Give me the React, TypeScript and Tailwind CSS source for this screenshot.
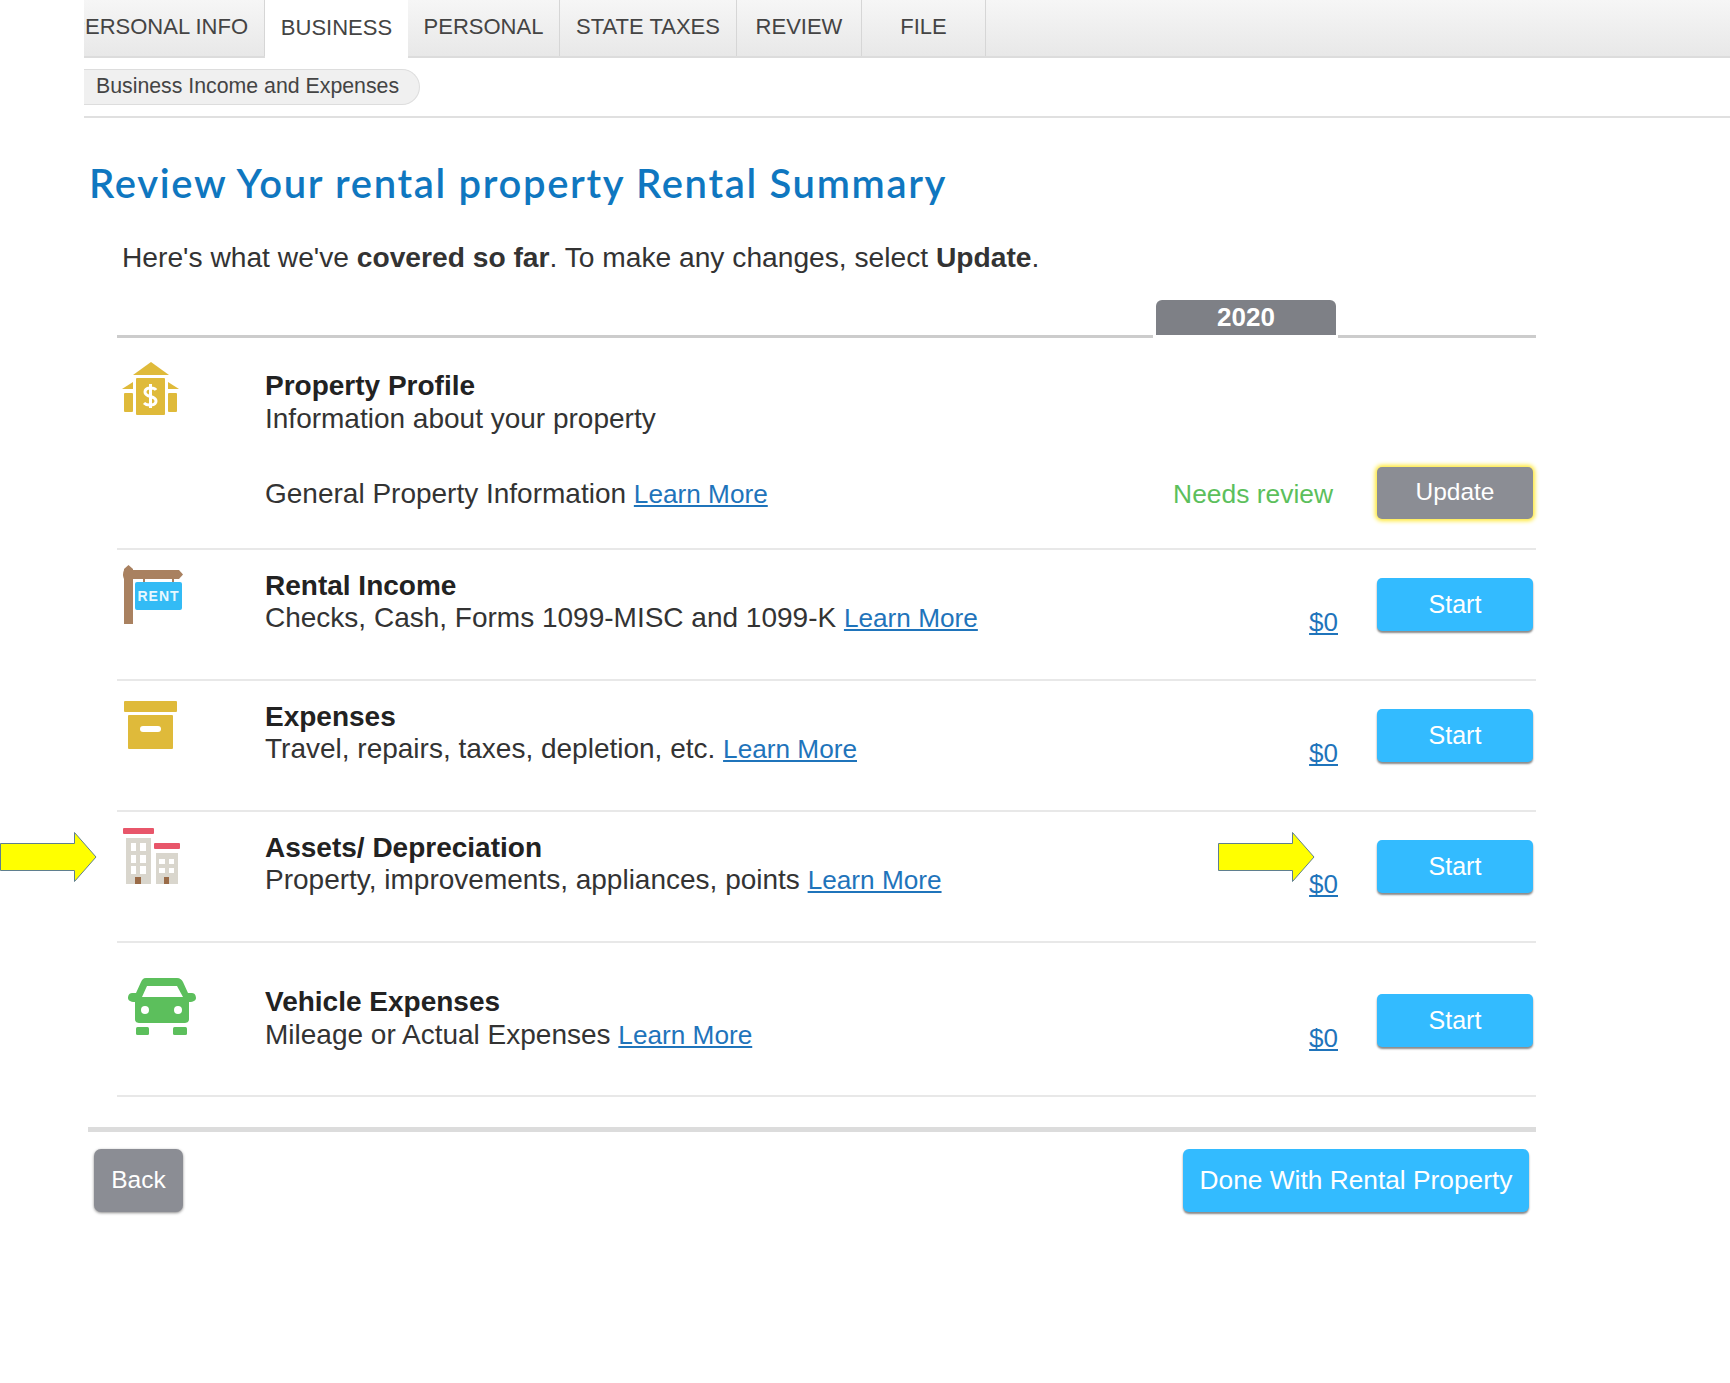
type RowProps = {
  icon: React.ReactNode
  title: string
  desc: string
}

function HouseIcon() {
  return (
    <svg width="58" height="54" viewBox="0 0 58 54" fill="#dfba3a">
      <path d="M29 0 L47 13 L11 13 Z" />
      <rect x="14" y="16" width="29" height="37" rx="1" />
      <path d="M0 27 L11 20 L11 27 Z" />
      <path d="M57 27 L46 20 L46 27 Z" />
      <rect x="2" y="31" width="9" height="19" rx="1" />
      <rect x="46" y="31" width="9" height="19" rx="1" />
      <path d="M34 28 C32 25 23 25 23 30 C23 36 34 33 34 39 C34 44 25 44 22 41 M28.5 22 V46" fill="none" stroke="#fff" strokeWidth="3" />
    </svg>
  )
}

function RentIcon() {
  return (
    <svg className="-mt-px" width="62" height="60" viewBox="0 0 62 60">
      <path d="M2 4 L6.5 0 L11 4 V59 H2 Z" fill="#a98160" />
      <path d="M2 5 H57 L61 9.5 L57 14 H2 Q0 9.5 2 5 Z" fill="#a98160" />
      <rect x="21" y="14" width="2" height="3" fill="#a98160" />
      <rect x="50" y="14" width="2" height="3" fill="#a98160" />
      <rect x="13" y="17" width="47" height="28" rx="2" fill="#33bbf5" />
      <text x="36.5" y="36" textAnchor="middle" fill="#e8f8ff" fontSize="14" fontWeight="700" letterSpacing="1" fontFamily="'Liberation Sans', sans-serif">RENT</text>
    </svg>
  )
}

function BoxIcon() {
  return (
    <svg width="54" height="50" viewBox="0 0 54 50" fill="#dfba3a">
      <rect x="0" y="0" width="53" height="11" rx="1" />
      <rect x="4" y="14" width="45" height="34" rx="1" />
      <rect x="16" y="25" width="21" height="6" rx="3" fill="#fff" />
    </svg>
  )
}

function BuildingsIcon() {
  const win = "#ffffff"
  return (
    <svg width="60" height="58" viewBox="0 0 60 58">
      <rect x="1" y="0" width="31" height="6" rx="1" fill="#e8566a" />
      <rect x="4" y="10" width="25" height="46" fill="#d9d6cd" />
      <rect x="32" y="15" width="26" height="6" rx="1" fill="#e8566a" />
      <rect x="34" y="25" width="22" height="31" fill="#d9d6cd" />
      {[15, 27, 38].map((y) => (
        <g key={y} fill={win}>
          <rect x="9" y={y} width="5" height="8" />
          <rect x="18" y={y} width="6" height="8" />
        </g>
      ))}
      {[31, 40].map((y) => (
        <g key={y} fill={win}>
          <rect x="37" y={y} width="6" height="5" />
          <rect x="47" y={y} width="5" height="5" />
        </g>
      ))}
      <rect x="13" y="49" width="6" height="7" fill="#9a6b47" />
      <rect x="42" y="49" width="5" height="7" fill="#9a6b47" />
    </svg>
  )
}

function CarIcon() {
  return (
    <svg width="68" height="57" viewBox="0 0 68 57" fill="#5cbf5c">
      <path d="M18 0 H49 C52 0 54 2 55 4 L60 15 H64 C67 15 68 18 68 20 C68 22 66 24 61 24 V41 C61 44 59 45 56 45 H12 C9 45 7 44 7 41 V24 C2 24 0 22 0 20 C0 18 1 15 4 15 H8 L13 4 C14 2 15 0 18 0 Z" />
      <path d="M19 8 H49 L55 19 H14 Z" fill="#fff" />
      <circle cx="17" cy="32" r="4" fill="#fff" />
      <circle cx="50" cy="32" r="4" fill="#fff" />
      <rect x="8" y="49" width="13" height="8" rx="1.5" />
      <rect x="45" y="49" width="14" height="8" rx="1.5" />
    </svg>
  )
}

function YellowArrow({ className }: { className: string }) {
  return (
    <svg className={className} width="97" height="52" viewBox="0 0 97 52">
      <path d="M0.5 12.5 H74.5 V1.5 L96 26 L74.5 50.5 V39.5 H0.5 Z" fill="#ffff00" stroke="#5f7f8f" strokeWidth="1" />
    </svg>
  )
}

function LearnMore() {
  return <a className="text-[26.2px] text-[#1f74bb] underline">Learn More</a>
}

function Row({ icon, title, desc }: RowProps) {
  return (
    <div className="flex h-[131px] items-start border-b-2 border-[#e8e8e8]">
      <div className="w-[148px] shrink-0 pt-[16px] pl-[5px]">{icon}</div>
      <div className="min-w-0 flex-1 pt-[20px] text-[28px] leading-[32px] text-[#333]">
        <div className="font-bold text-[#222]">{title}</div>
        <div>
          {desc} <LearnMore />
        </div>
      </div>
      <a className="mt-[56px] text-[26px] leading-[32px] text-[#1f74bb] underline">$0</a>
      <div className="mt-[28px] mr-[3px] ml-[39px] flex h-[53px] w-[156px] items-center justify-center rounded-[5px] bg-[#33bbff] text-[25px] text-white shadow-[0_2px_2px_#8a8a8a]">
        Start
      </div>
    </div>
  )
}

const tabs = [
  { label: "PERSONAL", w: "w-[152px]" },
  { label: "STATE TAXES", w: "w-[177px]" },
  { label: "REVIEW", w: "w-[125px]" },
  { label: "FILE", w: "w-[124px]" },
]

export default function App() {
  return (
    <div className="relative h-[1383px] w-[1730px] overflow-hidden bg-white font-['Liberation_Sans',sans-serif] text-[#333]">
      <YellowArrow className="absolute top-[831px] left-0" />
      <YellowArrow className="absolute top-[831px] left-[1218px]" />

      <div className="pl-[84px]">
        <div className="flex h-[58px] border-b-2 border-[#dcdcdc] bg-gradient-to-b from-[#f6f6f6] to-[#e8e8e8] text-[22px] text-[#444]">
          <div className="flex w-[181px] justify-end overflow-hidden border-r border-[#d6d6d6] pt-[10px] pr-[16px] whitespace-nowrap">
            PERSONAL INFO
          </div>
          <div className="-mb-[2px] flex w-[143px] justify-center bg-white pt-[11px]">BUSINESS</div>
          {tabs.map((t) => (
            <div key={t.label} className={`flex justify-center border-r border-[#d6d6d6] pt-[10px] ${t.w}`}>
              {t.label}
            </div>
          ))}
        </div>
        <div className="h-[60px] border-b-2 border-[#e0e0e0] pt-[11px]">
          <div className="flex h-[36px] w-[336px] items-center rounded-r-[18px] border border-l-0 border-[#dddddd] bg-[#f0f0f0] pl-[12px] text-[21.3px] text-[#444]">
            Business Income and Expenses
          </div>
        </div>

        <h1 className="mt-[39px] pl-[5px] font-['Lato',sans-serif] text-[40px] leading-[52px] font-semibold tracking-[1.66px] text-[#0f77c0]">
          Review Your rental property Rental Summary
        </h1>
        <p className="mt-[31px] pl-[38px] text-[28.2px] leading-[35px]">
          Here's what we've <b>covered so far</b>. To make any changes, select <b>Update</b>.
        </p>

        <div className="mt-[25px] ml-[33px] w-[1419px]">
          <div className="flex h-[38px] items-end">
            <div className="h-[3px] w-[1036px] bg-[#cccccc]" />
            <div className="mb-[3px] ml-[3px] flex h-[35px] w-[180px] items-center justify-center rounded-t-[6px] bg-[#7e8086] text-[26px] font-bold text-white">
              2020
            </div>
            <div className="ml-[2px] h-[3px] flex-1 bg-[#cccccc]" />
          </div>

          <div className="flex h-[212px] flex-col border-b-2 border-[#e8e8e8]">
            <div className="flex items-start">
              <div className="w-[148px] shrink-0 pt-[24px] pl-[5px]">
                <HouseIcon />
              </div>
              <div className="pt-[31px] text-[28px] leading-[33px]">
                <div className="font-bold text-[#222]">Property Profile</div>
                <div>Information about your property</div>
              </div>
            </div>
            <div className="mt-[32px] flex items-center">
              <div className="flex-1 pt-[2px] pl-[148px] text-[28px] leading-[32px]">
                General Property Information <LearnMore />
              </div>
              <div className="pt-[2px] text-[26.4px] leading-[32px] text-[#5cbf5c]">Needs review</div>
              <div className="mr-[3px] ml-[44px] flex h-[52px] w-[156px] items-center justify-center rounded-[5px] bg-[#8b8d94] pb-[2px] text-[24.5px] text-white shadow-[0_0_4px_2px_#ffe833]">
                Update
              </div>
            </div>
          </div>

          <Row icon={<RentIcon />} title="Rental Income" desc="Checks, Cash, Forms 1099-MISC and 1099-K" />
          <Row icon={<div className="pt-[4px] pl-[2px]"><BoxIcon /></div>} title="Expenses" desc="Travel, repairs, taxes, depletion, etc." />
          <Row icon={<BuildingsIcon />} title="Assets/ Depreciation" desc="Property, improvements, appliances, points" />
          <div className="flex h-[154px] items-start border-b-2 border-[#e8e8e8]">
            <div className="w-[148px] shrink-0 pt-[35px] pl-[11px]">
              <CarIcon />
            </div>
            <div className="min-w-0 flex-1 pt-[42px] text-[28px] leading-[33px] text-[#333]">
              <div className="font-bold text-[#222]">Vehicle Expenses</div>
              <div>
                Mileage or Actual Expenses <LearnMore />
              </div>
            </div>
            <a className="mt-[79px] text-[26px] leading-[32px] text-[#1f74bb] underline">$0</a>
            <div className="mt-[51px] mr-[3px] ml-[39px] flex h-[53px] w-[156px] items-center justify-center rounded-[5px] bg-[#33bbff] text-[25px] text-white shadow-[0_2px_2px_#8a8a8a]">
              Start
            </div>
          </div>
        </div>

        <div className="mt-[30px] ml-[4px] h-[5px] w-[1448px] bg-[#dcdcdc]" />
        <div className="mt-[17px] ml-[10px] flex w-[1435px] justify-between">
          <div className="flex h-[63px] w-[89px] items-center justify-center rounded-[7px] bg-[#8b8d94] text-[24.5px] text-white shadow-[0_1px_3px_#8a8a8a]">
            Back
          </div>
          <div className="flex h-[63px] w-[346px] items-center justify-center rounded-[6px] bg-[#33bbff] text-[26.3px] text-white shadow-[0_2px_2px_#8a8a8a]">
            Done With Rental Property
          </div>
        </div>
      </div>
    </div>
  )
}
